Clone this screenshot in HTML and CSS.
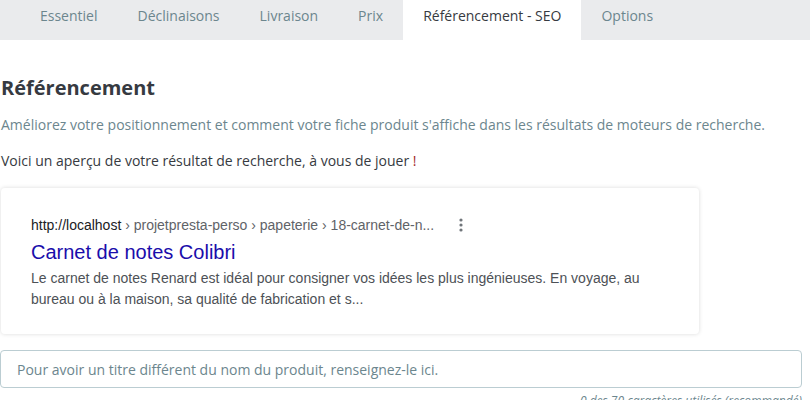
FILE: index.html
```html
<!DOCTYPE html>
<html lang="fr">
<head>
<meta charset="utf-8">
<link rel="stylesheet" href="styles.css">
</head>
<body>
<nav class="tabs">
  <a class="tab">Essentiel</a>
  <a class="tab">Déclinaisons</a>
  <a class="tab">Livraison</a>
  <a class="tab">Prix</a>
  <a class="tab active">Référencement - SEO</a>
  <a class="tab">Options</a>
</nav>
<main class="content">
  <h2 class="title">Référencement</h2>
  <p class="subtitle">Améliorez votre positionnement et comment votre fiche produit s'affiche dans les résultats de moteurs de recherche.</p>
  <p class="intro">Voici un aperçu de votre résultat de recherche, à vous de jouer <span class="bang">!</span></p>
  <div class="serp">
    <div class="serp-url">
      <span class="url-text"><span class="host">http://localhost</span> › projetpresta-perso › papeterie › 18-carnet-de-n...</span>
      <svg class="more" width="4" height="14" viewBox="0 0 4 14"><circle cx="2" cy="2" r="1.6"/><circle cx="2" cy="7" r="1.6"/><circle cx="2" cy="12" r="1.6"/></svg>
    </div>
    <div class="serp-title">Carnet de notes Colibri</div>
    <div class="serp-desc">Le carnet de notes Renard est idéal pour consigner vos idées les plus ingénieuses. En voyage, au bureau ou à la maison, sa qualité de fabrication et s...</div>
  </div>
  <div class="field">
    <input class="input" type="text" placeholder="Pour avoir un titre différent du nom du produit, renseignez-le ici.">
    <div class="hint">0 des 70 caractères utilisés (recommandé)</div>
  </div>
</main>
</body>
</html>
```
FILE: styles.css
```css
* { box-sizing: border-box; }
body {
  margin: 0;
  font-family: "Open Sans", "Noto Sans", sans-serif;
  color: #363a41;
  background: #fff;
  font-size: 14px;
}
.tabs {
  display: flex;
  height: 40px;
  background: #eaebed;
  padding-left: 20px;
}
.tab {
  padding: 5px 20px 0;
  line-height: 22px;
  font-size: 14px;
  color: #6c868e;
  height: 40px;
}
.tab.active {
  background: #fff;
  color: #363a41;
}
.content {
  padding: 0 8px 0 1px;
}
.title {
  margin: 34px 0 0 0;
  font-size: 20px;
  font-weight: 700;
  line-height: 28px;
  color: #363a41;
}
.subtitle {
  margin: 12px 0 0 0;
  line-height: 22px;
  color: #6c868e;
}
.intro {
  margin: 14px 0 0 0;
  line-height: 22px;
  color: #363a41;
}
.bang { color: #a32a2a; }
.serp {
  margin-top: 16px;
  width: 698px;
  border-radius: 4px;
  box-shadow: 0 0 4px rgba(0,0,0,0.15);
  background: #fff;
  padding: 28px 28px 24px 30px;
  font-family: "Liberation Sans", Arial, sans-serif;
}
.serp-url {
  display: flex;
  align-items: center;
  gap: 25px;
  font-size: 14px;
  line-height: 18px;
  color: #5f6368;
}
.host { color: #202124; }
.more { fill: #70757a; }
.serp-title {
  margin-top: 5px;
  font-size: 20px;
  line-height: 26px;
  color: #1a0dab;
}
.serp-desc {
  margin-top: 3px;
  font-size: 14px;
  line-height: 21px;
  color: #4d5156;
}
.field {
  margin-top: 16px;
  width: 802px;
  margin-left: -1px;
}
.input {
  display: block;
  width: 100%;
  height: 38px;
  border: 1px solid #bbcdd2;
  border-radius: 4px;
  padding: 0 16px;
  font-family: "Open Sans", "Noto Sans", sans-serif;
  font-size: 14px;
  color: #363a41;
}
.input::placeholder { color: #6c868e; opacity: 1; }
.hint {
  margin-top: 4px;
  text-align: right;
  font-size: 12px;
  font-style: italic;
  color: #6c868e;
  line-height: 18px;
}
```
